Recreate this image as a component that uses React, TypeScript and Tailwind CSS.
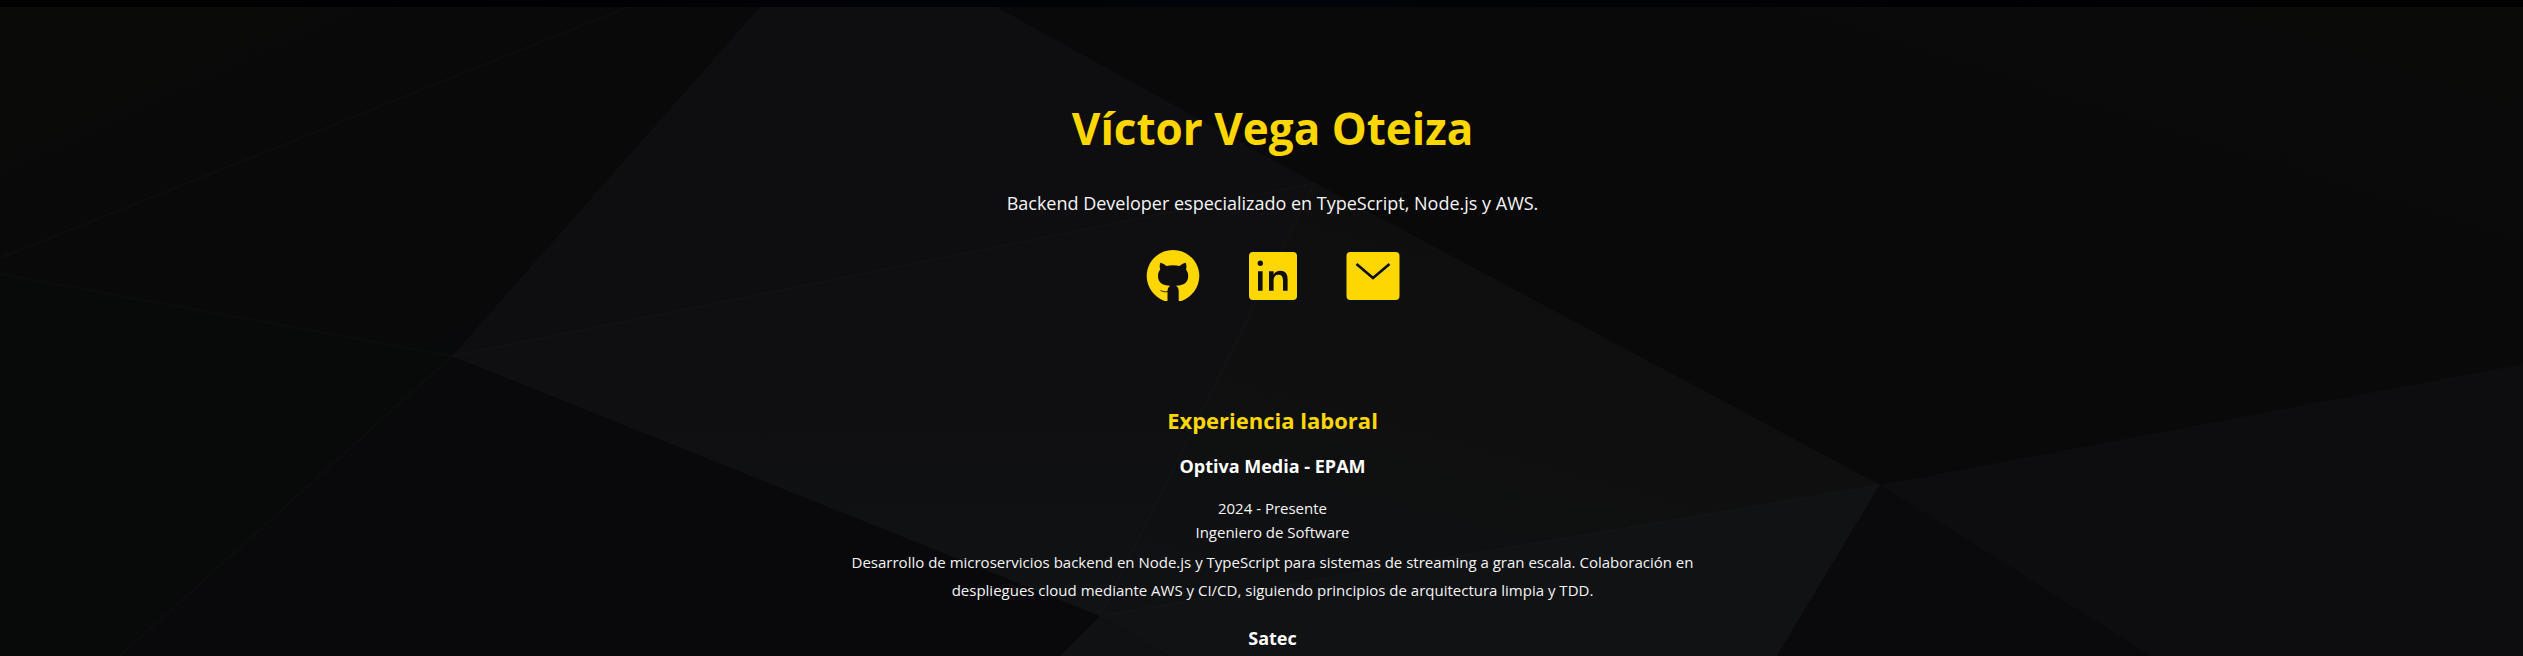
import React from "react";

const CONTACT_LINKS = [
  { label: "GitHub", href: "https://github.com", Icon: GitHubIcon },
  { label: "LinkedIn", href: "https://www.linkedin.com", Icon: LinkedInIcon },
  { label: "Correo", href: "mailto:", Icon: MailIcon },
];

function GitHubIcon() {
  return (
    <svg viewBox="0 0 64 64" className="size-16" aria-hidden="true">
      <path
        d="M32 6C17.500 6 5.700 17.500 5.700 32 5.700 43 13 53 23.500 57H40.500C51 53 58.300 43 58.300 32 58.300 17.500 46.500 6 32 6Z"
        fill="currentColor"
      />
      <path
        d="M19.300 18.800c2.300.6 4.500 1.700 6.200 3.200 4-.9 9-.9 13 0 1.700-1.500 3.900-2.600 6.200-3.200.9 2.300 1 4.600.3 6.600 1.500 1.900 2.200 4 2.200 6.600 0 6.200-4.200 9.700-12.200 9.700 1.600 1 2.700 2.800 2.700 5.300V57.500H26.500V47c0-2.500 1.200-4.300 2.700-5.300-8 0-12.200-3.500-12.200-9.700 0-2.600.7-4.700 2.200-6.600-.7-2-.6-4.300.1-6.600Z"
        fill="#0f0f11"
      />
      <path d="M19.500 46.300c1.700 1.300 4.200 1.800 7.500 1.300" fill="none" stroke="#0f0f11" strokeWidth="0.900" />
    </svg>
  );
}

function LinkedInIcon() {
  return (
    <svg viewBox="0 0 64 64" className="size-16" fill="currentColor" fillRule="evenodd" aria-hidden="true">
      <path d="M12 8h40a4 4 0 0 1 4 4v40a4 4 0 0 1-4 4H12a4 4 0 0 1-4-4V12a4 4 0 0 1 4-4ZM17 27.300v19.400h4.600V27.300ZM19.300 16.500a2.700 2.700 0 1 0 0 5.400 2.700 2.700 0 0 0 0-5.400ZM28 27.300v19.400h4.600V36.500c0-3.700 2-5.700 5-5.700 3 0 4.400 1.900 4.400 5.600v10.300h4.600V35c0-5.400-2.700-8.200-7.200-8.200-3 0-5.300 1.300-6.800 3.600V27.300Z" />
    </svg>
  );
}

function MailIcon() {
  return (
    <svg viewBox="0 0 64 64" className="size-16" aria-hidden="true">
      <rect x="5.500" y="8" width="53" height="48" rx="4" fill="currentColor" />
      <path d="M15.500 20 32 34l16.500-14" fill="none" stroke="#0f0f0e" strokeWidth="2.600" />
    </svg>
  );
}

function Backdrop() {
  return (
    <svg
      className="absolute inset-0 size-full"
      viewBox="0 0 2523 656"
      preserveAspectRatio="xMidYMid slice"
      aria-hidden="true"
    >
      <defs>
        <linearGradient id="left" x1="0" y1="0" x2="1" y2="1">
          <stop offset="0" stopColor="#0a0a09" />
          <stop offset="0.500" stopColor="#090909" />
          <stop offset="1" stopColor="#08090b" />
        </linearGradient>
        <linearGradient id="right" x1="0" y1="1" x2="1" y2="0">
          <stop offset="0" stopColor="#08080a" />
          <stop offset="0.500" stopColor="#09090a" />
          <stop offset="1" stopColor="#0a0a09" />
        </linearGradient>
        <linearGradient id="center" x1="0" y1="0" x2="0" y2="1">
          <stop offset="0" stopColor="#0f0f11" />
          <stop offset="0.500" stopColor="#0f0f11" />
          <stop offset="1" stopColor="#101214" />
        </linearGradient>
        <linearGradient id="mid" x1="0" y1="1" x2="0.500" y2="0">
          <stop offset="0" stopColor="#101113" />
          <stop offset="1" stopColor="#0e0e0d" />
        </linearGradient>
        <linearGradient id="top" x1="0" y1="0" x2="1" y2="0">
          <stop offset="0" stopColor="#000000" />
          <stop offset="0.500" stopColor="#02030a" />
          <stop offset="1" stopColor="#000000" />
        </linearGradient>
      </defs>
      <rect width="2523" height="656" fill="#09090b" />
      <path d="M0 0H762L452 356 0 274Z" fill="url(#left)" />
      <path d="M0 274 452 356 120 656H0Z" fill="#080909" />
      <path d="M996 0H2523V364L1880 485 1315 183Z" fill="url(#right)" />
      <path d="M766 0H984L1315 183 452 356Z" fill="#0e0e10" />
      <path d="M452 356 1315 183 1100 616Z" fill="url(#center)" />
      <path d="M1315 183 1880 485 1100 616Z" fill="url(#mid)" />
      <path d="M1100 616 1880 485 1777 656H1168Z" fill="#111214" />
      <path d="M1100 616 1168 656H1060Z" fill="#101113" />
      <path d="M1880 485 2523 364V656H2150Z" fill="#0d0d0f" />
      <path d="M1880 485 2150 656H1777Z" fill="#0a0a0c" />
      <path
        d="M0 258 628 7M0 274 452 356 120 656M452 356 1315 183 1100 616 1880 485"
        fill="none"
        stroke="#ffffff"
        strokeOpacity="0.020"
        strokeWidth="2"
      />
      <rect width="2523" height="7" fill="url(#top)" />
    </svg>
  );
}

export default function App() {
  return (
    <div className="relative min-h-screen overflow-hidden bg-[#09090b] font-['Open_Sans','Noto_Sans',sans-serif] text-[#f5f5f5]">
      <Backdrop />
      <div className="relative pl-[22px] text-center">
        <header className="flex flex-col items-center pt-24">
          <h1 className="text-[44px] leading-16 font-bold text-[#ffd700]">Víctor Vega Oteiza</h1>
          <p className="mt-7 text-[18px] leading-[30px]">
            Backend Developer especializado en TypeScript, Node.js y AWS.
          </p>
          <nav className="mt-[26px] flex gap-9 text-[#ffd700]" aria-label="Contacto">
            {CONTACT_LINKS.map(({ label, href, Icon }) => (
              <a key={label} href={href} aria-label={label}>
                <Icon />
              </a>
            ))}
          </nav>
        </header>
        <main className="mx-auto mt-24 w-full max-w-[880px]">
          <h2 className="text-[22px] leading-8 font-bold text-[#ffd700]">Experiencia laboral</h2>
          <article className="mt-4">
            <h3 className="text-[18px] leading-7 font-bold text-white">Optiva Media - EPAM</h3>
            <p className="mt-4 text-[15px] leading-6">2024 - Presente</p>
            <p className="text-[15px] leading-6">Ingeniero de Software</p>
            <p className="mt-1 text-[15px] leading-7">
              Desarrollo de microservicios backend en Node.js y TypeScript para sistemas de streaming a gran escala. Colaboración en
              despliegues cloud mediante AWS y CI/CD, siguiendo principios de arquitectura limpia y TDD.
            </p>
          </article>
          <article className="mt-5">
            <h3 className="text-[18px] leading-7 font-bold text-white">Satec</h3>
          </article>
        </main>
      </div>
    </div>
  );
}
